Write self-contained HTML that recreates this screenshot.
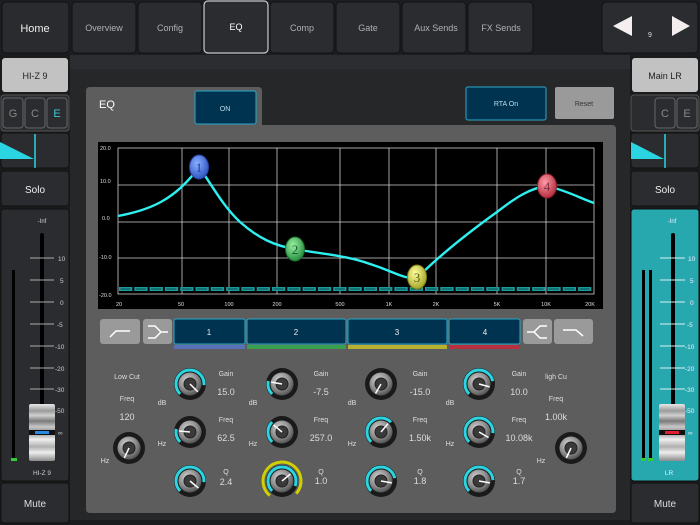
<!DOCTYPE html>
<html><head><meta charset="utf-8"><style>
html,body{margin:0;padding:0;background:#1a1b1d;}
svg{display:block;font-family:"Liberation Sans",sans-serif;}
</style></head><body>
<svg width="700" height="525" viewBox="0 0 700 525" xmlns="http://www.w3.org/2000/svg">
<defs>
<radialGradient id="kg" cx="0.4" cy="0.35" r="0.7"><stop offset="0" stop-color="#d8d8d8"/><stop offset="0.6" stop-color="#8a8a8a"/><stop offset="1" stop-color="#4a4a4a"/></radialGradient>
<linearGradient id="cap" x1="0" y1="0" x2="0" y2="1">
<stop offset="0" stop-color="#e8e8e8"/><stop offset="0.12" stop-color="#9a9a9a"/><stop offset="0.2" stop-color="#d0d0d0"/><stop offset="0.3" stop-color="#7a7a7a"/><stop offset="0.4" stop-color="#c8c8c8"/><stop offset="0.5" stop-color="#888"/><stop offset="0.62" stop-color="#f0f0f0"/><stop offset="0.75" stop-color="#b0b0b0"/><stop offset="0.85" stop-color="#eee"/><stop offset="1" stop-color="#8a8a8a"/></linearGradient>
<radialGradient id="n1" cx="0.4" cy="0.35" r="0.7"><stop offset="0" stop-color="#8ab0ff"/><stop offset="1" stop-color="#2a50c0"/></radialGradient>
<radialGradient id="n2" cx="0.4" cy="0.35" r="0.7"><stop offset="0" stop-color="#9af0a0"/><stop offset="1" stop-color="#1f8a3a"/></radialGradient>
<radialGradient id="n3" cx="0.4" cy="0.35" r="0.7"><stop offset="0" stop-color="#ffffa0"/><stop offset="1" stop-color="#a0a020"/></radialGradient>
<radialGradient id="n4" cx="0.4" cy="0.35" r="0.7"><stop offset="0" stop-color="#ff9aa8"/><stop offset="1" stop-color="#b02838"/></radialGradient>
</defs>

<!-- top bar -->
<rect x="0" y="0" width="700" height="55" fill="#1c1d20"/>
<g font-size="9" fill="#b0b0b0" text-anchor="middle">
<rect x="2" y="2" width="67" height="51" rx="4" fill="#2a2b2e" stroke="#111"/>
<text x="35" y="32" font-size="11" fill="#eee">Home</text>
<rect x="72" y="2" width="64" height="51" rx="4" fill="#2a2c30" stroke="#111"/><text x="104" y="31">Overview</text>
<rect x="138" y="2" width="64" height="51" rx="4" fill="#2a2c30" stroke="#111"/><text x="170" y="31">Config</text>
<rect x="204" y="1" width="64" height="52" rx="4" fill="#2a2c30" stroke="#c8c8c8" stroke-width="1.2"/><text x="236" y="30" fill="#fff">EQ</text>
<rect x="270" y="2" width="64" height="51" rx="4" fill="#2a2c30" stroke="#111"/><text x="302" y="31">Comp</text>
<rect x="336" y="2" width="64" height="51" rx="4" fill="#2a2c30" stroke="#111"/><text x="368" y="31">Gate</text>
<rect x="402" y="2" width="64" height="51" rx="4" fill="#2a2c30" stroke="#111"/><text x="436" y="31">Aux Sends</text>
<rect x="468" y="2" width="65" height="51" rx="4" fill="#2a2c30" stroke="#111"/><text x="501" y="31">FX Sends</text>
<rect x="602" y="2" width="96" height="51" rx="4" fill="#2a2c30" stroke="#111"/>
<polygon points="632,16 632,36 613,26" fill="#f4eeee"/>
<polygon points="672,16 672,36 690,26" fill="#f4eeee"/>
<text x="650" y="37" font-size="7" fill="#ddd">9</text>
</g>

<!-- main area -->
<rect x="70" y="55" width="560" height="14" fill="#2b2d31"/>
<rect x="70" y="69" width="560" height="456" fill="#262729"/>
<rect x="70" y="520" width="560" height="5" fill="#1a1b1d"/>

<!-- EQ panel -->
<path d="M86,91 q0,-4 4,-4 h168 q4,0 4,4 v34 h350 q4,0 4,4 v380 q0,4 -4,4 h-522 q-4,0 -4,-4 z" fill="#5d5d5d"/>
<text x="99" y="108" font-size="11" fill="#fff">EQ</text>
<rect x="195" y="91" width="61" height="33" rx="2" fill="#00334f" stroke="#2aa8c8"/>
<text x="225" y="111" font-size="7" fill="#bde" text-anchor="middle">ON</text>
<rect x="466" y="87" width="80" height="33" rx="2" fill="#00334f" stroke="#2aa8c8"/>
<text x="506" y="106" font-size="7" fill="#bde" text-anchor="middle">RTA On</text>
<rect x="555" y="87" width="59" height="32" rx="2" fill="#9a9a9a"/>
<text x="584" y="106" font-size="7" fill="#333" text-anchor="middle">Reset</text>

<!-- graph -->
<rect x="98" y="142" width="505" height="167" fill="#000"/>
<g stroke="#cfcfcf" stroke-width="0.8" fill="none">
<rect x="118" y="148" width="476" height="146"/>
<line x1="182" y1="148" x2="182" y2="294"/><line x1="229" y1="148" x2="229" y2="294"/>
<line x1="277" y1="148" x2="277" y2="294"/><line x1="340" y1="148" x2="340" y2="294"/>
<line x1="389" y1="148" x2="389" y2="294"/><line x1="436" y1="148" x2="436" y2="294"/>
<line x1="497" y1="148" x2="497" y2="294"/><line x1="546" y1="148" x2="546" y2="294"/>
<line x1="118" y1="185" x2="594" y2="185"/><line x1="118" y1="222" x2="594" y2="222"/>
<line x1="118" y1="258" x2="594" y2="258"/>
</g>
<g font-size="5.5" fill="#ddd">
<text x="100" y="150">20.0</text><text x="100" y="183">10.0</text><text x="102" y="220">0.0</text><text x="99" y="259">-10.0</text><text x="99" y="297">-20.0</text>
</g>
<g font-size="5.5" fill="#ddd" text-anchor="middle">
<text x="119" y="306">20</text><text x="181" y="306">50</text><text x="229" y="306">100</text><text x="277" y="306">200</text><text x="340" y="306">500</text><text x="389" y="306">1K</text><text x="436" y="306">2K</text><text x="497" y="306">5K</text><text x="546" y="306">10K</text><text x="590" y="306">20K</text>
</g>
<line x1="119" y1="289" x2="594" y2="289" stroke="#1a9a9a" stroke-width="4" stroke-dasharray="13.3 2"/>
<line x1="119" y1="289" x2="594" y2="289" stroke="#0a4a50" stroke-width="1" stroke-dasharray="10 5.3" stroke-dashoffset="-1.5"/>
<path d="M118,216 C150,210 175,200 199,167 C212,185 222,205 240,222 C258,238 275,246 295,249 C320,254 345,255 370,264 C390,270 405,280 417,278 C440,255 465,235 497,212 C515,198 530,188 547,186 C565,190 580,198 594,203" fill="none" stroke="#2ef0f0" stroke-width="2.4"/>
<g font-family="Liberation Serif,serif" font-size="13" text-anchor="middle">
<ellipse cx="199" cy="167" rx="9.5" ry="12" fill="url(#n1)" stroke="#2a40a0"/><text x="199" y="172" fill="#2040a0">1</text>
<ellipse cx="295" cy="249" rx="9.5" ry="12" fill="url(#n2)" stroke="#1a7030"/><text x="295" y="254" fill="#1a5a30">2</text>
<ellipse cx="417" cy="277" rx="9.5" ry="12" fill="url(#n3)" stroke="#808010"/><text x="417" y="282" fill="#606010">3</text>
<ellipse cx="547" cy="186" rx="9.5" ry="12" fill="url(#n4)" stroke="#902030"/><text x="547" y="191" fill="#803040">4</text>
</g>

<!-- band buttons -->
<rect x="100" y="319" width="40" height="25" rx="3" fill="#9a9a9a"/>
<path d="M110,337 l6,-6 h14" fill="none" stroke="#fff" stroke-width="1.5"/>
<rect x="143" y="319" width="29" height="25" rx="3" fill="#9a9a9a"/>
<path d="M148,326 h7 l6,6 h7 M148,338 h7 l6,-6" fill="none" stroke="#fff" stroke-width="1.5"/>
<g font-size="8" fill="#eee" text-anchor="middle">
<rect x="174" y="319" width="71" height="25" rx="2" fill="#00334f" stroke="#2aa8c8"/><text x="209" y="335">1</text>
<rect x="247" y="319" width="99" height="25" rx="2" fill="#00334f" stroke="#2aa8c8"/><text x="296" y="335">2</text>
<rect x="348" y="319" width="99" height="25" rx="2" fill="#00334f" stroke="#2aa8c8"/><text x="397" y="335">3</text>
<rect x="449" y="319" width="71" height="25" rx="2" fill="#00334f" stroke="#2aa8c8"/><text x="485" y="335">4</text>
</g>
<rect x="174" y="345" width="71" height="4" fill="#5a70b8"/>
<rect x="247" y="345" width="99" height="4" fill="#3aa050"/>
<rect x="348" y="345" width="99" height="4" fill="#b8b030"/>
<rect x="449" y="345" width="71" height="4" fill="#b83040"/>
<rect x="523" y="319" width="29" height="25" rx="3" fill="#9a9a9a"/>
<path d="M547,326 h-7 l-6,6 h-7 M547,338 h-7 l-6,-6" fill="none" stroke="#fff" stroke-width="1.5"/>
<rect x="554" y="319" width="39" height="25" rx="3" fill="#9a9a9a"/>
<path d="M563,330 h13 l7,6" fill="none" stroke="#fff" stroke-width="1.5"/>

<!-- knob labels -->
<g font-size="7" fill="#ddd" text-anchor="middle">
<text x="127" y="379">Low Cut</text><text x="127" y="401">Freq</text><text x="127" y="420" font-size="9">120</text><text x="105" y="463">Hz</text>
<text x="226" y="376">Gain</text><text x="226" y="395" font-size="9">15.0</text><text x="162" y="405">dB</text>
<text x="226" y="422">Freq</text><text x="226" y="441" font-size="9">62.5</text><text x="162" y="446">Hz</text>
<text x="226" y="474">Q</text><text x="226" y="485" font-size="9">2.4</text>
<text x="321" y="376">Gain</text><text x="321" y="395" font-size="9">-7.5</text><text x="253" y="405">dB</text>
<text x="321" y="422">Freq</text><text x="321" y="441" font-size="9">257.0</text><text x="253" y="446">Hz</text>
<text x="321" y="474">Q</text><text x="321" y="484" font-size="9">1.0</text>
<text x="420" y="376">Gain</text><text x="420" y="395" font-size="9">-15.0</text><text x="352" y="405">dB</text>
<text x="420" y="422">Freq</text><text x="420" y="441" font-size="9">1.50k</text><text x="352" y="446">Hz</text>
<text x="420" y="474">Q</text><text x="420" y="484" font-size="9">1.8</text>
<text x="519" y="376">Gain</text><text x="519" y="395" font-size="9">10.0</text><text x="450" y="405">dB</text>
<text x="519" y="422">Freq</text><text x="519" y="441" font-size="9">10.08k</text><text x="450" y="446">Hz</text>
<text x="519" y="474">Q</text><text x="519" y="484" font-size="9">1.7</text>
<text x="556" y="379">ligh Cu</text><text x="556" y="401">Freq</text><text x="556" y="420" font-size="9">1.00k</text><text x="541" y="463">Hz</text>
</g>

<!-- knobs -->
<g id="knobs">
<g transform="translate(129,448)"><circle r="16" fill="#1a1a1a"/><circle r="11.5" fill="url(#kg)"/><circle r="6" fill="#3a3a3a" stroke="#222"/><line x2="11" stroke="#fff" stroke-width="1.5" transform="rotate(115)"/></g>
<g transform="translate(190,384)"><circle r="16" fill="#1a1a1a"/><circle r="14" fill="none" stroke="#2ad4e0" stroke-width="3" stroke-dasharray="56 100" transform="rotate(135)"/><circle r="11.5" fill="url(#kg)"/><circle r="6" fill="#3a3a3a" stroke="#222"/><line x2="11" stroke="#fff" stroke-width="1.5" transform="rotate(45)"/></g>
<g transform="translate(190,432)"><circle r="16" fill="#1a1a1a"/><circle r="14" fill="none" stroke="#2ad4e0" stroke-width="3" stroke-dasharray="14 100" transform="rotate(135)"/><circle r="11.5" fill="url(#kg)"/><circle r="6" fill="#3a3a3a" stroke="#222"/><line x2="11" stroke="#fff" stroke-width="1.5" transform="rotate(185)"/></g>
<g transform="translate(190,481)"><circle r="16" fill="#1a1a1a"/><circle r="14" fill="none" stroke="#2ad4e0" stroke-width="3" stroke-dasharray="56 100" transform="rotate(135)"/><circle r="11.5" fill="url(#kg)"/><circle r="6" fill="#3a3a3a" stroke="#222"/><line x2="11" stroke="#fff" stroke-width="1.5" transform="rotate(40)"/></g>
<g transform="translate(282,384)"><circle r="16" fill="#1a1a1a"/><circle r="14" fill="none" stroke="#2ad4e0" stroke-width="3" stroke-dasharray="14 100" transform="rotate(135)"/><circle r="11.5" fill="url(#kg)"/><circle r="6" fill="#3a3a3a" stroke="#222"/><line x2="11" stroke="#fff" stroke-width="1.5" transform="rotate(190)"/></g>
<g transform="translate(282,432)"><circle r="16" fill="#1a1a1a"/><circle r="14" fill="none" stroke="#2ad4e0" stroke-width="3" stroke-dasharray="22 100" transform="rotate(135)"/><circle r="11.5" fill="url(#kg)"/><circle r="6" fill="#3a3a3a" stroke="#222"/><line x2="11" stroke="#fff" stroke-width="1.5" transform="rotate(220)"/></g>
<g transform="translate(282,481)"><circle r="19" fill="none" stroke="#d0d000" stroke-width="3" stroke-dasharray="90 200" transform="rotate(130)"/><circle r="16" fill="#1a1a1a"/><circle r="14" fill="none" stroke="#2ad4e0" stroke-width="3" stroke-dasharray="60 100" transform="rotate(135)"/><circle r="11.5" fill="url(#kg)"/><circle r="6" fill="#3a3a3a" stroke="#222"/><line x2="11" stroke="#fff" stroke-width="1.5" transform="rotate(-40)"/></g>
<g transform="translate(381,384)"><circle r="16" fill="#1a1a1a"/><circle r="11.5" fill="url(#kg)"/><circle r="6" fill="#3a3a3a" stroke="#222"/><line x2="11" stroke="#fff" stroke-width="1.5" transform="rotate(120)"/></g>
<g transform="translate(381,432)"><circle r="16" fill="#1a1a1a"/><circle r="14" fill="none" stroke="#2ad4e0" stroke-width="3" stroke-dasharray="44 100" transform="rotate(135)"/><circle r="11.5" fill="url(#kg)"/><circle r="6" fill="#3a3a3a" stroke="#222"/><line x2="11" stroke="#fff" stroke-width="1.5" transform="rotate(-50)"/></g>
<g transform="translate(381,481)"><circle r="16" fill="#1a1a1a"/><circle r="14" fill="none" stroke="#2ad4e0" stroke-width="3" stroke-dasharray="52 100" transform="rotate(135)"/><circle r="11.5" fill="url(#kg)"/><circle r="6" fill="#3a3a3a" stroke="#222"/><line x2="11" stroke="#fff" stroke-width="1.5" transform="rotate(10)"/></g>
<g transform="translate(479,384)"><circle r="16" fill="#1a1a1a"/><circle r="14" fill="none" stroke="#2ad4e0" stroke-width="3" stroke-dasharray="52 100" transform="rotate(135)"/><circle r="11.5" fill="url(#kg)"/><circle r="6" fill="#3a3a3a" stroke="#222"/><line x2="11" stroke="#fff" stroke-width="1.5" transform="rotate(15)"/></g>
<g transform="translate(479,432)"><circle r="16" fill="#1a1a1a"/><circle r="14" fill="none" stroke="#2ad4e0" stroke-width="3" stroke-dasharray="56 100" transform="rotate(135)"/><circle r="11.5" fill="url(#kg)"/><circle r="6" fill="#3a3a3a" stroke="#222"/><line x2="11" stroke="#fff" stroke-width="1.5" transform="rotate(30)"/></g>
<g transform="translate(479,481)"><circle r="16" fill="#1a1a1a"/><circle r="14" fill="none" stroke="#2ad4e0" stroke-width="3" stroke-dasharray="54 100" transform="rotate(135)"/><circle r="11.5" fill="url(#kg)"/><circle r="6" fill="#3a3a3a" stroke="#222"/><line x2="11" stroke="#fff" stroke-width="1.5" transform="rotate(10)"/></g>
<g transform="translate(571,448)"><circle r="16" fill="#1a1a1a"/><circle r="11.5" fill="url(#kg)"/><circle r="6" fill="#3a3a3a" stroke="#222"/><line x2="11" stroke="#fff" stroke-width="1.5" transform="rotate(115)"/></g>
</g>

<!-- left strip -->
<rect x="2" y="58" width="66" height="34" rx="3" fill="#c2c2c2"/>
<text x="35" y="79" font-size="9" fill="#222" text-anchor="middle">HI-Z 9</text>
<rect x="1" y="95" width="68" height="36" rx="3" fill="#2a2c30" stroke="#555"/>
<g font-size="11" text-anchor="middle">
<rect x="3" y="98" width="20" height="30" rx="3" fill="#2a2c30" stroke="#666"/><text x="13" y="117" fill="#888">G</text>
<rect x="25" y="98" width="20" height="30" rx="3" fill="#2a2c30" stroke="#666"/><text x="35" y="117" fill="#888">C</text>
<rect x="47" y="98" width="20" height="30" rx="3" fill="#2a2c30" stroke="#666"/><text x="57" y="117" fill="#3cc8d8">E</text>
</g>
<rect x="1" y="133" width="68" height="35" rx="3" fill="#2a2c30" stroke="#111"/>
<polygon points="0,142 34,159 0,159" fill="#2ad4e0"/>
<line x1="35" y1="134" x2="35" y2="168" stroke="#2ad4e0" stroke-width="1.5"/>
<rect x="1" y="171" width="68" height="35" rx="3" fill="#2a2c30" stroke="#111"/>
<text x="35" y="193" font-size="10" fill="#eee" text-anchor="middle">Solo</text>
<rect x="1" y="209" width="68" height="272" rx="3" fill="#2a2c30" stroke="#111"/>
<rect x="1" y="483" width="68" height="40" rx="3" fill="#2a2c30" stroke="#111"/>
<text x="35" y="507" font-size="10" fill="#ddd" text-anchor="middle">Mute</text>
<text x="42" y="223" font-size="6" fill="#ccc" text-anchor="middle">-Inf</text>
<rect x="40" y="233" width="4" height="175" rx="2" fill="#000"/>
<rect x="12" y="270" width="3" height="190" fill="#000"/>
<rect x="11" y="458" width="6" height="3" fill="#3c3"/>
<g stroke="#aaa" stroke-width="1">
<line x1="30" y1="258" x2="54" y2="258"/><line x1="30" y1="280" x2="54" y2="280"/><line x1="30" y1="302" x2="54" y2="302"/><line x1="30" y1="324" x2="54" y2="324"/><line x1="30" y1="346" x2="54" y2="346"/><line x1="30" y1="368" x2="54" y2="368"/><line x1="30" y1="389" x2="54" y2="389"/>
</g>
<g font-size="6.5" fill="#ccc">
<text x="58" y="261">10</text><text x="60" y="283">5</text><text x="60" y="305">0</text><text x="57" y="327">-5</text><text x="55" y="349">-10</text><text x="55" y="371">-20</text><text x="55" y="392">-30</text><text x="55" y="413">-50</text><text x="58" y="435">∞</text>
</g>
<rect x="29" y="404" width="26" height="57" rx="2" fill="url(#cap)"/>
<rect x="29" y="430" width="26" height="5" fill="#111"/>
<rect x="35" y="431" width="14" height="3" fill="#2a8ae0"/>
<text x="42" y="475" font-size="6.5" fill="#ccc" text-anchor="middle">HI-Z 9</text>

<!-- right strip -->
<rect x="632" y="58" width="66" height="34" rx="3" fill="#c2c2c2"/>
<text x="665" y="79" font-size="9" fill="#222" text-anchor="middle">Main LR</text>
<rect x="631" y="95" width="68" height="36" rx="3" fill="#2a2c30" stroke="#555"/>
<g font-size="11" text-anchor="middle">
<rect x="655" y="98" width="20" height="30" rx="3" fill="#2a2c30" stroke="#666"/><text x="665" y="117" fill="#888">C</text>
<rect x="677" y="98" width="20" height="30" rx="3" fill="#2a2c30" stroke="#666"/><text x="687" y="117" fill="#888">E</text>
</g>
<rect x="631" y="133" width="68" height="35" rx="3" fill="#2a2c30" stroke="#111"/>
<polygon points="631,142 664,159 631,159" fill="#2ad4e0"/>
<line x1="665" y1="134" x2="665" y2="168" stroke="#2ad4e0" stroke-width="1.5"/>
<rect x="631" y="171" width="68" height="35" rx="3" fill="#2a2c30" stroke="#111"/>
<text x="665" y="193" font-size="10" fill="#eee" text-anchor="middle">Solo</text>
<rect x="631" y="209" width="68" height="272" rx="3" fill="#27a8ae" stroke="#111"/>
<rect x="631" y="483" width="68" height="40" rx="3" fill="#2a2c30" stroke="#111"/>
<text x="665" y="507" font-size="10" fill="#ddd" text-anchor="middle">Mute</text>
<text x="672" y="223" font-size="6" fill="#eef" text-anchor="middle">-Inf</text>
<rect x="671" y="233" width="4" height="175" rx="2" fill="#000"/>
<rect x="642" y="270" width="3" height="190" fill="#000"/>
<rect x="649" y="270" width="3" height="190" fill="#000"/>
<rect x="641" y="458" width="5" height="3" fill="#3c3"/><rect x="648" y="458" width="5" height="3" fill="#3c3"/>
<g stroke="#d8f0f0" stroke-width="1">
<line x1="660" y1="258" x2="685" y2="258"/><line x1="660" y1="280" x2="685" y2="280"/><line x1="660" y1="302" x2="685" y2="302"/><line x1="660" y1="324" x2="685" y2="324"/><line x1="660" y1="346" x2="685" y2="346"/><line x1="660" y1="368" x2="685" y2="368"/><line x1="660" y1="389" x2="685" y2="389"/>
</g>
<g font-size="6.5" fill="#eef">
<text x="688" y="261">10</text><text x="690" y="283">5</text><text x="690" y="305">0</text><text x="687" y="327">-5</text><text x="685" y="349">-10</text><text x="685" y="371">-20</text><text x="685" y="392">-30</text><text x="685" y="413">-50</text><text x="688" y="435">∞</text>
</g>
<rect x="659" y="404" width="26" height="57" rx="2" fill="url(#cap)"/>
<rect x="659" y="430" width="26" height="5" fill="#111"/>
<rect x="665" y="431" width="14" height="3" fill="#e02030"/>
<text x="669" y="475" font-size="6.5" fill="#eef" text-anchor="middle">LR</text>
</svg>
</body></html>
